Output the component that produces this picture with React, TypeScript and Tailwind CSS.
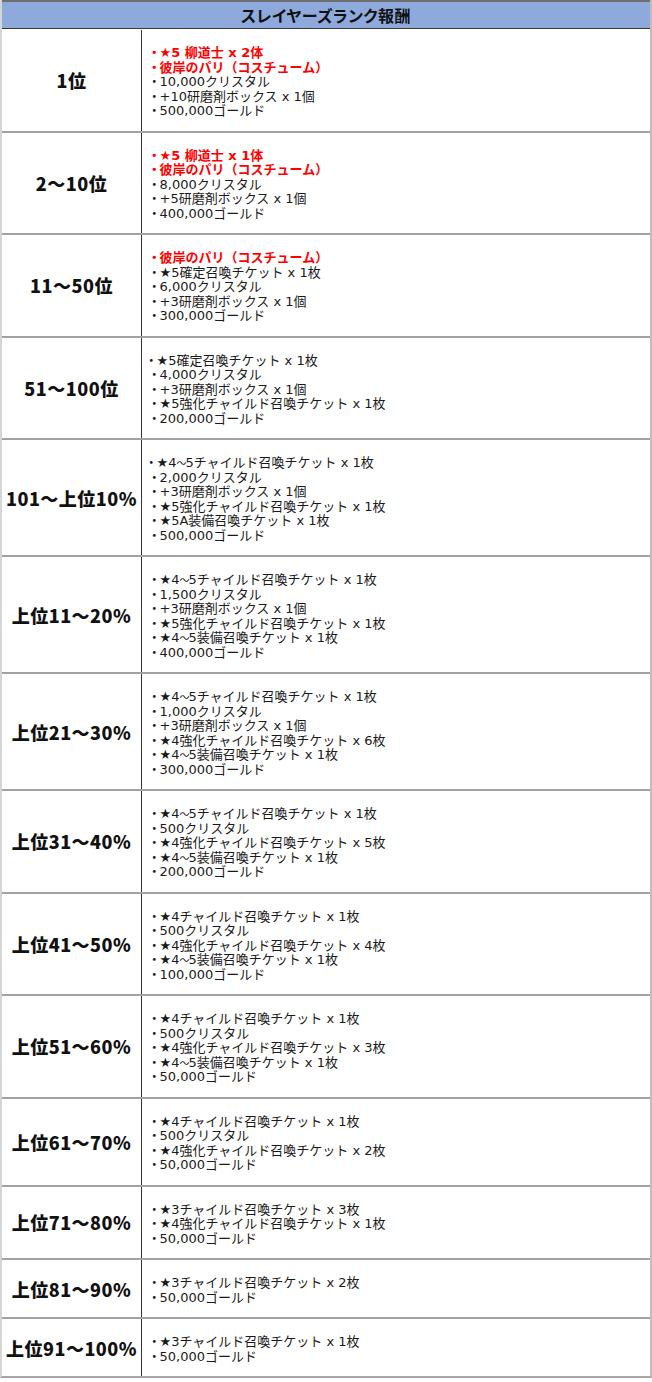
import React from 'react';

interface Line {
  text: string;
  red?: boolean;
  tight?: boolean;
}

interface RankRow {
  rank: string;
  items: Line[];
}

const r = (text: string): Line => ({ text, red: true });
const n = (text: string): Line => ({ text });
const t = (text: string): Line => ({ text, tight: true });

const rows: RankRow[] = [
  {
    rank: '1位',
    items: [r('★5 柳道士 x 2体'), r('彼岸のパリ（コスチューム）'), n('10,000クリスタル'), n('+10研磨剤ボックス x 1個'), n('500,000ゴールド')],
  },
  {
    rank: '2〜10位',
    items: [r('★5 柳道士 x 1体'), r('彼岸のパリ（コスチューム）'), n('8,000クリスタル'), n('+5研磨剤ボックス x 1個'), n('400,000ゴールド')],
  },
  {
    rank: '11〜50位',
    items: [r('彼岸のパリ（コスチューム）'), n('★5確定召喚チケット x 1枚'), n('6,000クリスタル'), n('+3研磨剤ボックス x 1個'), n('300,000ゴールド')],
  },
  {
    rank: '51〜100位',
    items: [t('★5確定召喚チケット x 1枚'), n('4,000クリスタル'), n('+3研磨剤ボックス x 1個'), n('★5強化チャイルド召喚チケット x 1枚'), n('200,000ゴールド')],
  },
  {
    rank: '101〜上位10%',
    items: [
      t('★4〜5チャイルド召喚チケット x 1枚'),
      n('2,000クリスタル'),
      n('+3研磨剤ボックス x 1個'),
      n('★5強化チャイルド召喚チケット x 1枚'),
      n('★5A装備召喚チケット x 1枚'),
      n('500,000ゴールド'),
    ],
  },
  {
    rank: '上位11〜20%',
    items: [
      n('★4〜5チャイルド召喚チケット x 1枚'),
      n('1,500クリスタル'),
      n('+3研磨剤ボックス x 1個'),
      n('★5強化チャイルド召喚チケット x 1枚'),
      n('★4〜5装備召喚チケット x 1枚'),
      n('400,000ゴールド'),
    ],
  },
  {
    rank: '上位21〜30%',
    items: [
      n('★4〜5チャイルド召喚チケット x 1枚'),
      n('1,000クリスタル'),
      n('+3研磨剤ボックス x 1個'),
      n('★4強化チャイルド召喚チケット x 6枚'),
      n('★4〜5装備召喚チケット x 1枚'),
      n('300,000ゴールド'),
    ],
  },
  {
    rank: '上位31〜40%',
    items: [
      n('★4〜5チャイルド召喚チケット x 1枚'),
      n('500クリスタル'),
      n('★4強化チャイルド召喚チケット x 5枚'),
      n('★4〜5装備召喚チケット x 1枚'),
      n('200,000ゴールド'),
    ],
  },
  {
    rank: '上位41〜50%',
    items: [
      n('★4チャイルド召喚チケット x 1枚'),
      n('500クリスタル'),
      n('★4強化チャイルド召喚チケット x 4枚'),
      n('★4〜5装備召喚チケット x 1枚'),
      n('100,000ゴールド'),
    ],
  },
  {
    rank: '上位51〜60%',
    items: [
      n('★4チャイルド召喚チケット x 1枚'),
      n('500クリスタル'),
      n('★4強化チャイルド召喚チケット x 3枚'),
      n('★4〜5装備召喚チケット x 1枚'),
      n('50,000ゴールド'),
    ],
  },
  {
    rank: '上位61〜70%',
    items: [n('★4チャイルド召喚チケット x 1枚'), n('500クリスタル'), n('★4強化チャイルド召喚チケット x 2枚'), n('50,000ゴールド')],
  },
  {
    rank: '上位71〜80%',
    items: [n('★3チャイルド召喚チケット x 3枚'), n('★4強化チャイルド召喚チケット x 1枚'), n('50,000ゴールド')],
  },
  {
    rank: '上位81〜90%',
    items: [n('★3チャイルド召喚チケット x 2枚'), n('50,000ゴールド')],
  },
  {
    rank: '上位91〜100%',
    items: [n('★3チャイルド召喚チケット x 1枚'), n('50,000ゴールド')],
  },
];

// the wave dash is set narrower, as in the reference
const ItemText: React.FC<{ text: string }> = ({ text }) => {
  const parts = text.split('〜');
  return (
    <>
      {parts.map((p, k) => (
        <React.Fragment key={k}>
          {k > 0 && <span className="text-[10px] leading-[0] tracking-[-1px]">〜</span>}
          {p}
        </React.Fragment>
      ))}
    </>
  );
};

export default function App() {
  return (
    <div className="w-[652px] bg-white font-['Noto_Sans_CJK_JP','Noto_Sans',sans-serif] text-[#111]">
      <div className="border-l-2 border-r-2 border-b-2 border-l-[#d6d6d6] border-r-[#bdbdbd] border-b-[#a6a6a6]">
        {/* header */}
        <div className="h-[29px] border-t-2 border-t-[#707070] border-b border-b-[#3a3a30] bg-[#8eaadc] flex items-center justify-center">
          <span className="text-[16px] font-bold leading-none tracking-[0.5px] [font-feature-settings:'palt']">スレイヤーズランク報酬</span>
        </div>

        {rows.map((row, i) => (
          <div key={row.rank} className={`flex ${i === 0 ? 'pt-px' : 'border-t-2 border-t-[#a2a2a2]'}`}>
            <div className="w-[140px] shrink-0 border-r border-r-[#333] flex items-center justify-center">
              <span className="text-[18px] font-black leading-none whitespace-nowrap tracking-[0.5px]">{row.rank}</span>
            </div>
            <div className="flex-1 flex flex-col justify-center pt-[16px] pb-[12px] pl-[6px] font-['DejaVu_Sans','Noto_Sans_CJK_JP',sans-serif] text-[13px] leading-[14.5px] whitespace-nowrap">
              {row.items.map((item, j) => (
                <div
                  key={j}
                  className={`h-[14.5px] ${item.tight ? '' : 'pl-[3px]'} ${item.red ? 'text-[#ff0000] font-bold' : 'text-[#1a1a1a]'}`}
                >
                  <span className="mr-[2px] [font-feature-settings:'palt']">・</span>
                  <ItemText text={item.text} />
                </div>
              ))}
            </div>
          </div>
        ))}
      </div>
    </div>
  );
}
